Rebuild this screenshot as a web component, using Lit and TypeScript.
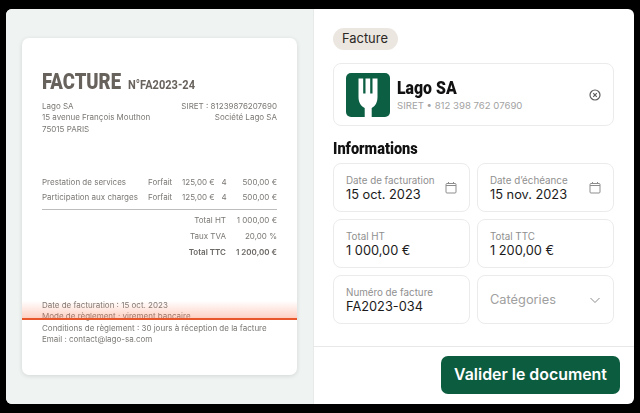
import { LitElement, html, css } from "lit";
import { customElement } from "lit/decorators.js";

const calendar = html`<svg class="cal" viewBox="0 0 12 13" width="12" height="13" fill="none" stroke="#8d8d8d" stroke-width="1"><rect x="1" y="2.500" width="10" height="9.500" rx="1"/><path d="M1 4.500h10M3.500 1v2M8.500 1v2"/></svg>`;

@customElement("app-root")
export class AppRoot extends LitElement {
  static styles = css`
    :host { display: block; width: 640px; height: 413px; background: #000; font-family: Inter, "Noto Sans", sans-serif; overflow: hidden; }
    .window { box-sizing: border-box; width: 628px; height: 395px; margin: 9px 6px; display: flex; border-radius: 6px; overflow: hidden; background: #fff; }
    .left { width: 308px; flex: none; background: #eff3f2; border-right: 1px solid #e6eaea; padding: 29px 16px 29px 16px; box-sizing: border-box; }
    .doc { position: relative; width: 275px; height: 337px; background: #fff; border-radius: 7px; box-shadow: 0 1px 4px rgba(40,50,50,.14); }
    .paper { padding: 31px 20px 0; box-sizing: border-box; color: #7b7874; font-size: 8px; line-height: 11.2px; filter: blur(.25px); }
    h1 { margin: 0; display: flex; align-items: baseline; gap: 6px; font-family: Roboto, sans-serif; font-weight: 900; color: #68625c; font-size: 22px; line-height: 26px; height: 26px; }
    h1 .t { display: inline-block; transform: scaleX(.84); transform-origin: left; width: 80px; white-space: nowrap; }
    h1 .n { font-size: 13px; font-weight: 700; display: inline-block; transform: scaleX(.85); transform-origin: left; white-space: nowrap; }
    .addr { display: flex; justify-content: space-between; margin-top: 6.200px; }
    .addr .r { text-align: right; }
    .lines { margin-top: 42.400px; display: grid; grid-template-columns: 106px 34px 32px 1fr 50px; row-gap: 3.800px; padding-bottom: 5.400px; border-bottom: 1px solid #bdbdbd; white-space: nowrap; }
    .lines .e { text-align: right; }
    .lines .q { padding-left: 7.500px; }
    .totals { display: grid; grid-template-columns: 1fr 51px; row-gap: 4.800px; margin-top: 5.400px; padding-left: 130px; }
    .totals div { text-align: right; white-space: nowrap; }
    .totals .b { font-weight: 600; color: #6b6764; }
    .foot { margin-top: 41.800px; white-space: nowrap; }
    .glow { position: absolute; left: 0; right: 0; top: 263px; height: 17px; background: linear-gradient(to bottom, rgba(250,120,80,0), rgba(250,120,80,.34)); border-bottom: 2px solid #e8562c; }
    .right { flex: 1; display: flex; flex-direction: column; min-width: 0; }
    .form { flex: 1; padding: 19px 20px 0 19px; }
    .pill { display: inline-block; background: #ebe6e0; border-radius: 11px; height: 22px; line-height: 22px; padding: 0 10px 0 9px; font-size: 12.900px; color: #2b2826; vertical-align: top; }
    .company { margin-top: 13px; height: 63px; box-sizing: border-box; border: 1px solid #ebebeb; border-radius: 8px; padding: 9px 12px; display: flex; align-items: center; gap: 7px; }
    .logo { flex: none; width: 44px; height: 44px; border-radius: 5px; background: #0c5f42; display: block; }
    .cinfo { flex: 1; }
    .cname { font-family: Roboto, sans-serif; font-weight: 900; font-size: 18px; line-height: 20px; color: #111; transform: scaleX(.88); transform-origin: left; }
    .siret { font-size: 9.600px; line-height: 13px; color: #a3a3a3; margin-top: 1px; }
    .close { flex: none; }
    h2 { margin: 13px 0 4.300px; font-family: Roboto, sans-serif; font-weight: 900; font-size: 16px; line-height: 20px; color: #111; transform: scaleX(.91); transform-origin: left; }
    .grid { display: grid; grid-template-columns: 137px 137px; gap: 7px; }
    .field { height: 49px; box-sizing: border-box; border: 1px solid #ebebeb; border-radius: 8px; padding: 0 12px; display: flex; align-items: center; justify-content: space-between; }
    .txt { padding-top: 1.500px; }
    .lab { font-size: 9.800px; line-height: 12px; color: #8f8f8f; white-space: nowrap; }
    .val { font-size: 12.800px; line-height: 16px; color: #1b1b1b; white-space: nowrap; }
    .ph { font-size: 12.800px; color: #a0a0a0; }
    .foot-bar { height: 58px; border-top: 1px solid #e8e8e8; box-sizing: border-box; padding: 9px 14px 0 0; display: flex; justify-content: flex-end; }
    .btn { width: 179px; height: 38px; border: 0; border-radius: 7px; background: #0c5c40; color: #fff; font: 600 15.900px/38px Inter, sans-serif; padding: 0; }
  `;

  render() {
    return html`<div class="window">
      <section class="left">
        <div class="doc">
          <div class="paper">
            <h1><span class="t">FACTURE</span><span class="n">N°FA2023-24</span></h1>
            <div class="addr">
              <div>Lago SA<br />15 avenue François Mouthon<br />75015 PARIS</div>
              <div class="r">SIRET : 81239876207690<br />Société Lago SA</div>
            </div>
            <div class="lines">
              <span>Prestation de services</span><span>Forfait</span><span class="e">125,00 €</span><span class="q">4</span><span class="e">500,00 €</span>
              <span>Participation aux charges</span><span>Forfait</span><span class="e">125,00 €</span><span class="q">4</span><span class="e">500,00 €</span>
            </div>
            <div class="totals">
              <div>Total HT</div><div>1 000,00 €</div>
              <div>Taux TVA</div><div>20,00 %</div>
              <div class="b">Total TTC</div><div class="b">1 200,00 €</div>
            </div>
            <div class="foot">Date de facturation : 15 oct. 2023<br />Mode de règlement : virement bancaire<br />Conditions de règlement : 30 jours à réception de la facture<br />Email : contact@lago-sa.com</div>
          </div>
          <div class="glow"></div>
        </div>
      </section>
      <section class="right">
        <div class="form">
          <span class="pill">Facture</span>
          <div class="company">
            <svg class="logo" viewBox="0 0 44 44"><path fill="#fff" d="M12.500 5.500h4.700v15h2.300v-15h4.700v15h2.300v-15h5v18.500c0 6-2.800 9.500-5.800 11V44h-7V35c-3.200-1.500-6.200-5-6.200-11z"/></svg>
            <div class="cinfo"><div class="cname">Lago SA</div><div class="siret">SIRET • 812 398 762 07690</div></div>
            <svg class="close" viewBox="0 0 12 12" width="12" height="12" fill="none" stroke="#5c5c5c" stroke-width="1.200"><circle cx="6" cy="6" r="5"/><path d="M4.200 4.200l3.600 3.600M7.800 4.200L4.200 7.800"/></svg>
          </div>
          <h2>Informations</h2>
          <div class="grid">
            <div class="field"><div class="txt"><div class="lab">Date de facturation</div><div class="val">15 oct. 2023</div></div>${calendar}</div>
            <div class="field"><div class="txt"><div class="lab">Date d’échéance</div><div class="val">15 nov. 2023</div></div>${calendar}</div>
            <div class="field"><div class="txt"><div class="lab">Total HT</div><div class="val">1 000,00 €</div></div></div>
            <div class="field"><div class="txt"><div class="lab">Total TTC</div><div class="val">1 200,00 €</div></div></div>
            <div class="field"><div class="txt"><div class="lab">Numéro de facture</div><div class="val">FA2023-034</div></div></div>
            <div class="field"><span class="ph">Catégories</span><svg viewBox="0 0 12 12" width="12" height="12" fill="none" stroke="#8d8d8d" stroke-width="1"><path d="M1.500 4l4.500 4.500L10.500 4"/></svg></div>
          </div>
        </div>
        <div class="foot-bar"><button class="btn">Valider le document</button></div>
      </section>
    </div>`;
  }
}
